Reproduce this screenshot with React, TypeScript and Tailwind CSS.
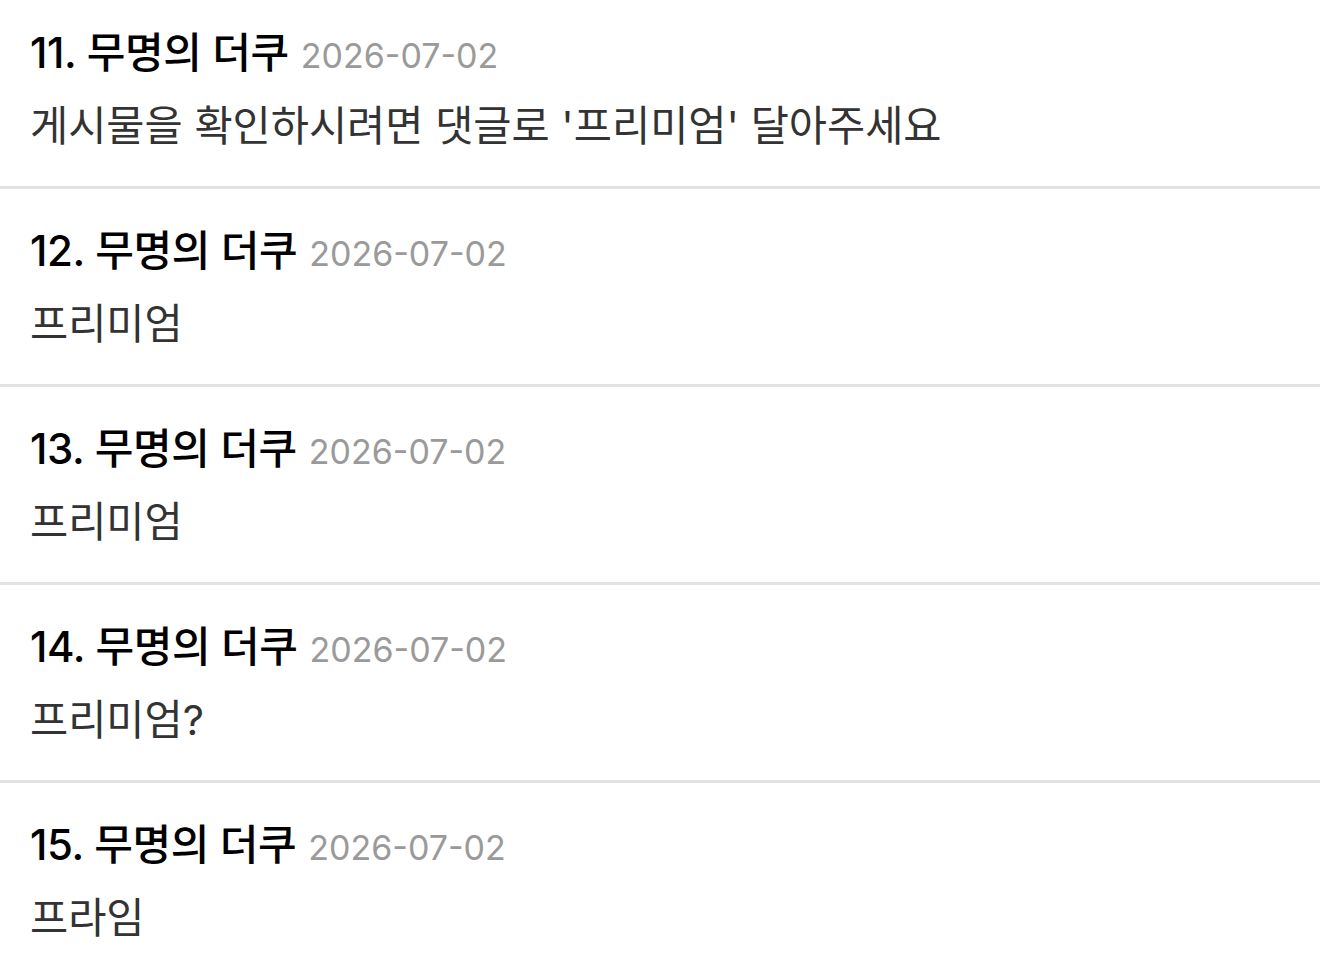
const comments = [
  { no: 11, name: "무명의 더쿠", date: "2026-07-02", body: "게시물을 확인하시려면 댓글로 '프리미엄' 달아주세요" },
  { no: 12, name: "무명의 더쿠", date: "2026-07-02", body: "프리미엄" },
  { no: 13, name: "무명의 더쿠", date: "2026-07-02", body: "프리미엄" },
  { no: 14, name: "무명의 더쿠", date: "2026-07-02", body: "프리미엄?" },
  { no: 15, name: "무명의 더쿠", date: "2026-07-02", body: "프라임" },
];

export default function App() {
  return (
    <div
      className="min-h-screen bg-white overflow-hidden"
      style={{ fontFamily: 'Inter, "Noto Sans CJK KR", "Noto Sans", sans-serif' }}
    >
      <ul className="-mt-[9px]">
        {comments.map((c) => (
          <li key={c.no} className="h-[198px] border-b-[3px] border-[#e2e2e2] pl-[30px] pr-6 pt-[38px]">
            <div className="flex h-12 items-baseline gap-3 leading-[48px]">
              <span className="text-[42px] font-medium tracking-[-0.4px] text-black">
                {c.no}. {c.name}
              </span>
              <span className="text-[34px] text-[#9a9a9a]">{c.date}</span>
            </div>
            <p className="mt-[25px] h-12 text-[41.5px] leading-[48px] text-[#333]">{c.body}</p>
          </li>
        ))}
      </ul>
    </div>
  );
}
